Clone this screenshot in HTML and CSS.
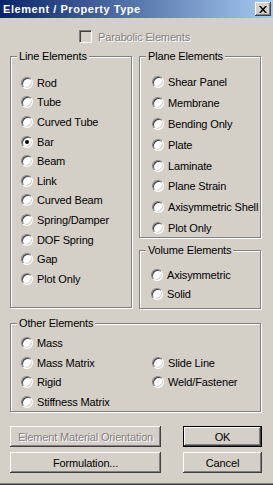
FILE: index.html
```html
<!DOCTYPE html>
<html lang="en">
<head>
    <meta charset="UTF-8">
    <title>Element / Property Type</title>
    <link rel="stylesheet" href="styles.css">
</head>
<body>
    <div class="window">
        <div class="titlebar">
            <span class="title">Element / Property Type</span>
            <span class="close-btn">
                <svg width="8" height="7" viewBox="0 0 8 7">
                    <path d="M0 0h2l2 2.5L6 0h2L5 3.5 8 7H6L4 4.5 2 7H0l3-3.5z" fill="#000"/>
                </svg>
            </span>
        </div>

        <div class="content">
            <div class="parabolic">
                <span class="checkbox disabled"></span>
                <span class="disabled-text">Parabolic Elements</span>
            </div>

            <div class="groups">
                <div class="group line-group">
                    <span class="group-label">Line Elements</span>
                    <label class="option"><span class="radio"></span>Rod</label>
                    <label class="option"><span class="radio"></span>Tube</label>
                    <label class="option"><span class="radio"></span>Curved Tube</label>
                    <label class="option"><span class="radio checked"></span>Bar</label>
                    <label class="option"><span class="radio"></span>Beam</label>
                    <label class="option"><span class="radio"></span>Link</label>
                    <label class="option"><span class="radio"></span>Curved Beam</label>
                    <label class="option"><span class="radio"></span>Spring/Damper</label>
                    <label class="option"><span class="radio"></span>DOF Spring</label>
                    <label class="option"><span class="radio"></span>Gap</label>
                    <label class="option"><span class="radio"></span>Plot Only</label>
                </div>

                <div class="right-col">
                    <div class="group plane-group">
                        <span class="group-label">Plane Elements</span>
                        <label class="option"><span class="radio"></span>Shear Panel</label>
                        <label class="option"><span class="radio"></span>Membrane</label>
                        <label class="option"><span class="radio"></span>Bending Only</label>
                        <label class="option"><span class="radio"></span>Plate</label>
                        <label class="option"><span class="radio"></span>Laminate</label>
                        <label class="option"><span class="radio"></span>Plane Strain</label>
                        <label class="option"><span class="radio"></span>Axisymmetric Shell</label>
                        <label class="option"><span class="radio"></span>Plot Only</label>
                    </div>
                    <div class="group volume-group">
                        <span class="group-label">Volume Elements</span>
                        <label class="option"><span class="radio"></span>Axisymmetric</label>
                        <label class="option"><span class="radio"></span>Solid</label>
                    </div>
                </div>
            </div>

            <div class="group other-group">
                <span class="group-label">Other Elements</span>
                <label class="option wide"><span class="radio"></span>Mass</label>
                <label class="option"><span class="radio"></span>Mass Matrix</label>
                <label class="option"><span class="radio"></span>Slide Line</label>
                <label class="option"><span class="radio"></span>Rigid</label>
                <label class="option"><span class="radio"></span>Weld/Fastener</label>
                <label class="option"><span class="radio"></span>Stiffness Matrix</label>
            </div>

            <div class="buttons">
                <button class="btn disabled-btn" disabled>Element Material Orientation</button>
                <button class="btn default-btn">OK</button>
                <button class="btn">Formulation...</button>
                <button class="btn">Cancel</button>
            </div>
        </div>
    </div>
</body>
</html>
```

FILE: styles.css
```css
body {
    margin: 0;
    font-family: "Liberation Sans", Arial, sans-serif;
    font-size: 11px;
    color: #000;
}
.window {
    width: 273px;
    height: 485px;
    box-sizing: border-box;
    background-color: #d4d0c8;
    border-bottom: 1px solid #404040;
    box-shadow: inset 0 -1px 0 #808080;
}
.titlebar {
    height: 18px;
    display: flex;
    align-items: center;
    justify-content: space-between;
    padding: 0 2px 0 3px;
    background: linear-gradient(to right, #0a246a, #a6caf0);
}
.title {
    color: #fff;
    font-weight: bold;
    font-size: 11px;
    letter-spacing: 0.55px;
}
.close-btn {
    width: 16px;
    height: 14px;
    box-sizing: border-box;
    display: flex;
    align-items: center;
    justify-content: center;
    background-color: #d4d0c8;
    box-shadow: inset -1px -1px #404040, inset 1px 1px #fff, inset -2px -2px #808080;
}
.content {
    padding: 0 11px 0 10px;
    letter-spacing: -0.15px;
}
.parabolic {
    display: flex;
    align-items: center;
    gap: 6px;
    height: 13px;
    margin-top: 12px;
    padding-left: 69px;
}
.checkbox {
    width: 13px;
    height: 13px;
    box-sizing: border-box;
    border: 1px solid;
    border-color: #808080 #fff #fff #808080;
    box-shadow: inset 1px 1px #404040, inset -1px -1px #d4d0c8;
}
.checkbox.disabled {
    background-color: #d4d0c8;
}
.disabled-text {
    color: #808080;
    text-shadow: 1px 1px 0 #fff;
}
.groups {
    display: flex;
    align-items: flex-start;
    gap: 7px;
    margin-top: 13px;
}
.right-col {
    display: flex;
    flex-direction: column;
    gap: 12px;
}
.group {
    position: relative;
    box-sizing: border-box;
    border: 1px solid #808080;
    box-shadow: 1px 1px 0 #fff, inset 1px 1px 0 #fff;
}
.group-label {
    position: absolute;
    top: -7px;
    left: 6px;
    padding: 0 2px;
    line-height: 13px;
    background-color: #d4d0c8;
}
.option {
    display: flex;
    align-items: center;
    gap: 4px;
    white-space: nowrap;
}
.radio {
    width: 12px;
    height: 12px;
    box-sizing: border-box;
    flex-shrink: 0;
    display: flex;
    align-items: center;
    justify-content: center;
    border-radius: 50%;
    border: 1px solid;
    border-color: #808080 #fff #fff #808080;
    box-shadow: inset 1px 1px #404040, inset -1px -1px #d4d0c8;
    background-color: #fff;
}
.radio.checked::after {
    content: "";
    width: 4px;
    height: 4px;
    border-radius: 50%;
    background-color: #000;
}
.line-group {
    width: 122px;
    height: 252px;
    padding: 16px 0 0 10px;
}
.line-group .option {
    height: 19.6px;
}
.plane-group {
    width: 122px;
    height: 182px;
    padding: 15px 0 0 12px;
}
.plane-group .option {
    height: 20.8px;
}
.volume-group {
    width: 122px;
    height: 59px;
    padding: 14px 0 0 11px;
}
.volume-group .option {
    height: 19.5px;
}
.other-group {
    width: 251px;
    height: 89px;
    margin-top: 14px;
    padding: 9px 0 0 10px;
    display: grid;
    grid-template-columns: 131px 1fr;
    grid-auto-rows: 19.7px;
}
.other-group .wide {
    grid-column: 1 / span 2;
}
.buttons {
    display: grid;
    grid-template-columns: 151px 79px;
    grid-auto-rows: 21px;
    column-gap: 22px;
    row-gap: 5px;
    margin-top: 14px;
}
.btn {
    font-family: "Liberation Sans", Arial, sans-serif;
    font-size: 11px;
    letter-spacing: -0.15px;
    color: #000;
    padding: 0;
    border: none;
    background-color: #d4d0c8;
    box-shadow: inset -1px -1px #404040, inset 1px 1px #fff, inset -2px -2px #808080;
}
.default-btn {
    border: 1px solid #000;
}
.disabled-btn {
    color: #808080;
    text-shadow: 1px 1px 0 #fff;
}
```
